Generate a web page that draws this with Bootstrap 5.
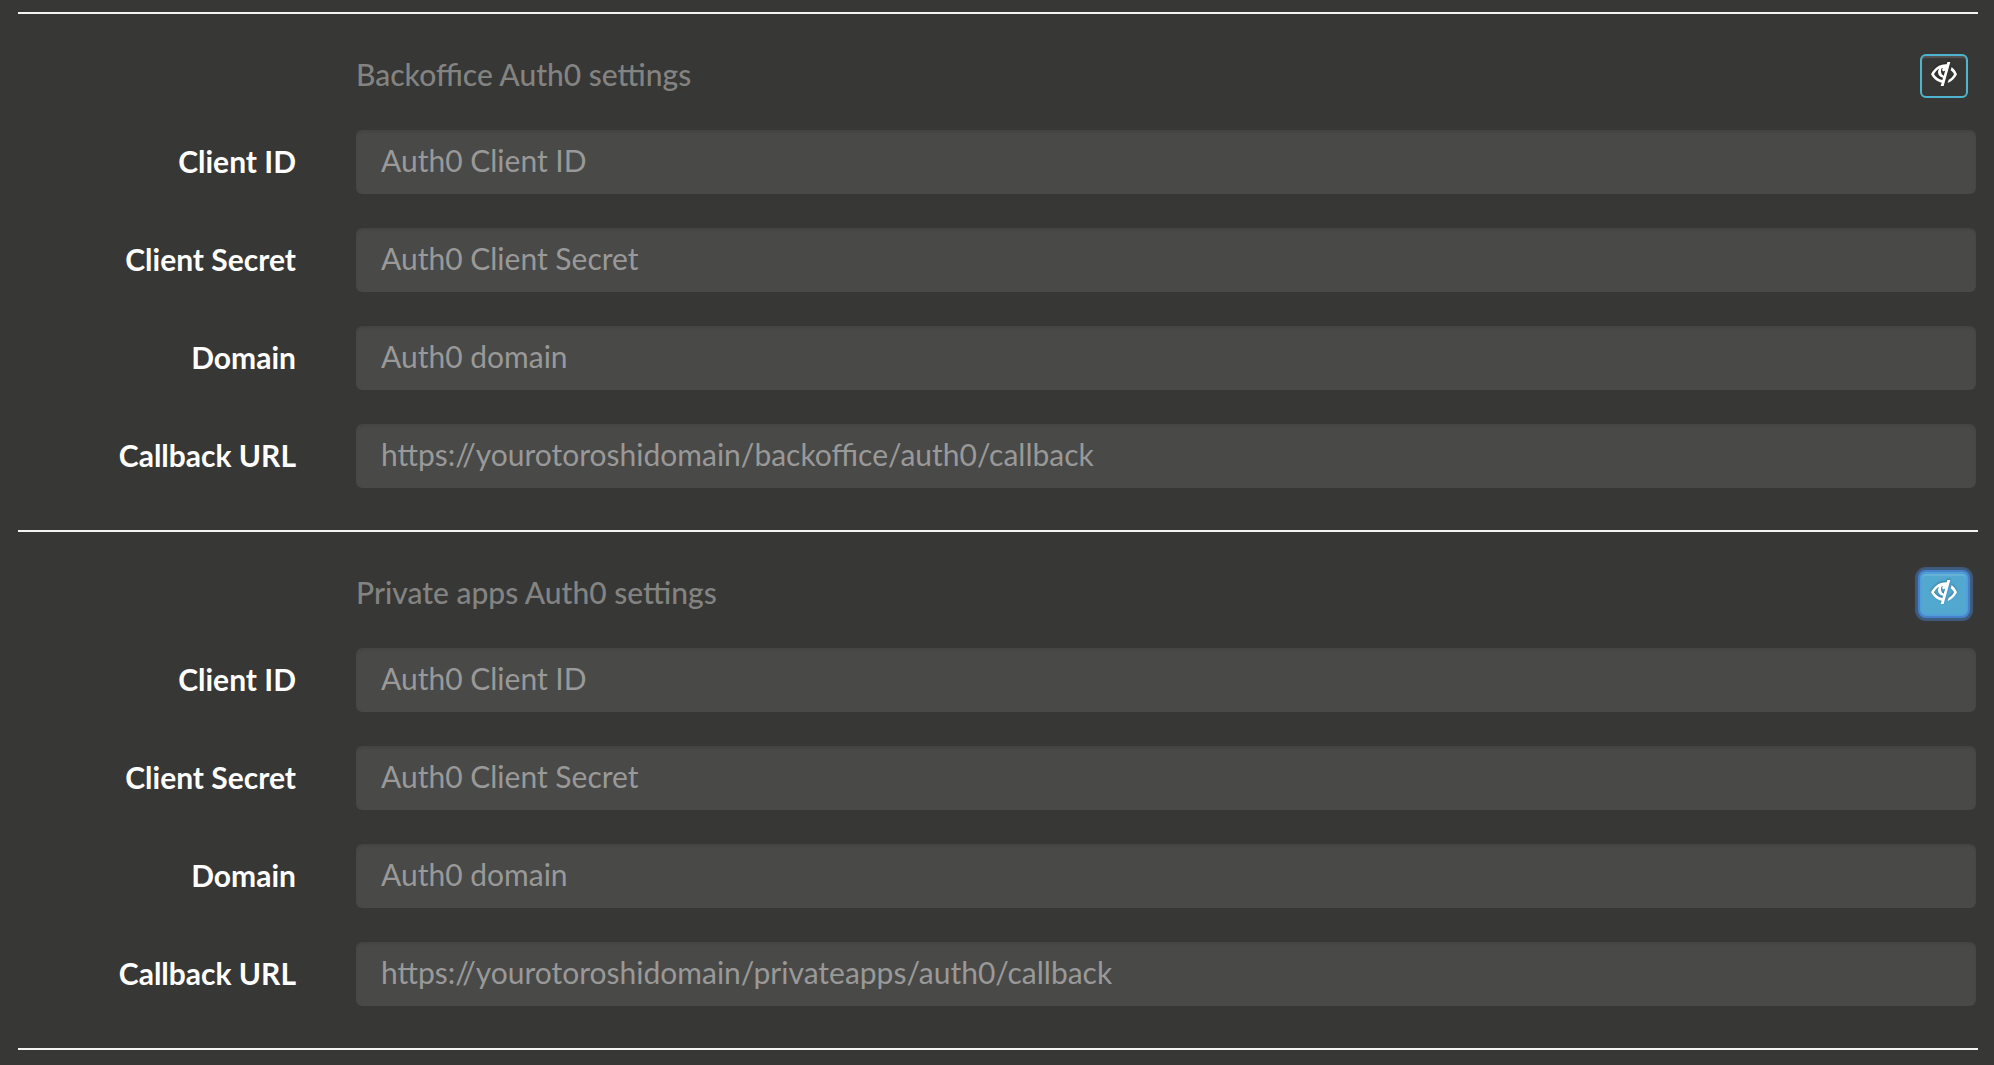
<!DOCTYPE html>
<html lang="en">
<head>
<meta charset="utf-8">
<meta name="viewport" content="width=device-width, initial-scale=1">
<title>Auth0 settings</title>
<link href="https://cdn.jsdelivr.net/npm/bootstrap@5.3.0/dist/css/bootstrap.min.css" rel="stylesheet">
<style>
body { background: #373735; color: #fff; font-family: Lato, "Open Sans", sans-serif; font-size: 30px; line-height: 40px; overflow-x: hidden; }
.settings-page { padding: 12px 16px 12px 18px; }
.rule { height: 2px; margin: 0; border: 0; background: #f4f4f0; opacity: 1; }
.settings-group { padding: 40px 0 42px; }
.settings-row { --bs-gutter-x: 60px; margin: 0 -28px; }
.field-row + .field-row { margin-top: 34px; }
.group-head { padding-bottom: 32px; }
.group-title { font-size: 30px; line-height: 40px; font-weight: 500; color: #838382; }
.settings-label { font-weight: 700; text-align: right; padding-bottom: 2px; }
.settings-input, .settings-input:focus { height: 64px; padding: 10px 25px 14px; border: 0; border-radius: 6px; background: #494947; color: #fff; font-size: 30px; line-height: 40px; box-shadow: inset 0 2px 3px rgba(0,0,0,.08); }
.settings-input::placeholder { color: #999; opacity: 1; }
.toggle-btn { width: 48px; height: 44px; padding: 0 0 4px; margin-right: 8px; border: 2px solid #4fb4cf; border-radius: 6px; color: #fff; box-shadow: inset 0 2px 1px rgba(255,255,255,.15); }
.toggle-btn:hover { color: #fff; border-color: #4fb4cf; }
.toggle-btn svg { filter: drop-shadow(0 -1px 1px rgba(0,0,0,.3)); }
.toggle-btn.is-active { background: #53a8d0; border-color: #509fd9; box-shadow: inset 0 2px 1px rgba(255,255,255,.12), 0 0 0 2px #4681ca, 0 0 1px 5px rgba(70,129,202,.5); }
</style>
</head>
<body>
<svg class="d-none" aria-hidden="true">
  <symbol id="eye-close" viewBox="0 0 78 72">
    <path d="M49 0h9L38 72h-9l3-10C18 60 7 50 0 37 10 18 25 6 47 7zM25 20C17 24 12 30 9 37c6 9 14 15 25 17l2-7c-9-1-15-8-15-16 0-4 1-8 4-11zm7-1c-4 8-2 19 6 22l5-16c-2 3-6 4-8 2s-2-5 1-8z"/>
    <path d="M62 15c7 5 12 12 16 22-6 12-15 21-28 26l3-10c7-3 12-8 16-16-2-5-6-9-10-12z"/>
  </symbol>
</svg>
<main class="container-fluid settings-page">
  <hr class="rule">
  <form class="settings-group">
    <div class="row settings-row group-head">
      <div class="col-10 offset-2 d-flex justify-content-between align-items-start">
        <h2 class="group-title m-0">Backoffice Auth0 settings</h2>
        <button type="button" class="btn toggle-btn d-flex align-items-center justify-content-center" aria-label="Hide backoffice settings">
          <svg width="26" height="24" fill="currentColor" aria-hidden="true"><use href="#eye-close"/></svg>
        </button>
      </div>
    </div>
    <div class="row settings-row field-row align-items-center">
      <label class="col-2 settings-label" for="bo-id">Client ID</label>
      <div class="col-10"><input class="form-control settings-input" id="bo-id" type="text" placeholder="Auth0 Client ID"></div>
    </div>
    <div class="row settings-row field-row align-items-center">
      <label class="col-2 settings-label" for="bo-secret">Client Secret</label>
      <div class="col-10"><input class="form-control settings-input" id="bo-secret" type="text" placeholder="Auth0 Client Secret"></div>
    </div>
    <div class="row settings-row field-row align-items-center">
      <label class="col-2 settings-label" for="bo-domain">Domain</label>
      <div class="col-10"><input class="form-control settings-input" id="bo-domain" type="text" placeholder="Auth0 domain"></div>
    </div>
    <div class="row settings-row field-row align-items-center">
      <label class="col-2 settings-label" for="bo-url">Callback URL</label>
      <div class="col-10"><input class="form-control settings-input" id="bo-url" type="text" placeholder="https://yourotoroshidomain/backoffice/auth0/callback"></div>
    </div>
  </form>
  <hr class="rule">
  <form class="settings-group">
    <div class="row settings-row group-head">
      <div class="col-10 offset-2 d-flex justify-content-between align-items-start">
        <h2 class="group-title m-0">Private apps Auth0 settings</h2>
        <button type="button" class="btn toggle-btn is-active d-flex align-items-center justify-content-center" aria-label="Hide private apps settings">
          <svg width="26" height="24" fill="currentColor" aria-hidden="true"><use href="#eye-close"/></svg>
        </button>
      </div>
    </div>
    <div class="row settings-row field-row align-items-center">
      <label class="col-2 settings-label" for="pa-id">Client ID</label>
      <div class="col-10"><input class="form-control settings-input" id="pa-id" type="text" placeholder="Auth0 Client ID"></div>
    </div>
    <div class="row settings-row field-row align-items-center">
      <label class="col-2 settings-label" for="pa-secret">Client Secret</label>
      <div class="col-10"><input class="form-control settings-input" id="pa-secret" type="text" placeholder="Auth0 Client Secret"></div>
    </div>
    <div class="row settings-row field-row align-items-center">
      <label class="col-2 settings-label" for="pa-domain">Domain</label>
      <div class="col-10"><input class="form-control settings-input" id="pa-domain" type="text" placeholder="Auth0 domain"></div>
    </div>
    <div class="row settings-row field-row align-items-center">
      <label class="col-2 settings-label" for="pa-url">Callback URL</label>
      <div class="col-10"><input class="form-control settings-input" id="pa-url" type="text" placeholder="https://yourotoroshidomain/privateapps/auth0/callback"></div>
    </div>
  </form>
  <hr class="rule">
</main>
<script src="https://cdn.jsdelivr.net/npm/bootstrap@5.3.0/dist/js/bootstrap.bundle.min.js"></script>
</body>
</html>
